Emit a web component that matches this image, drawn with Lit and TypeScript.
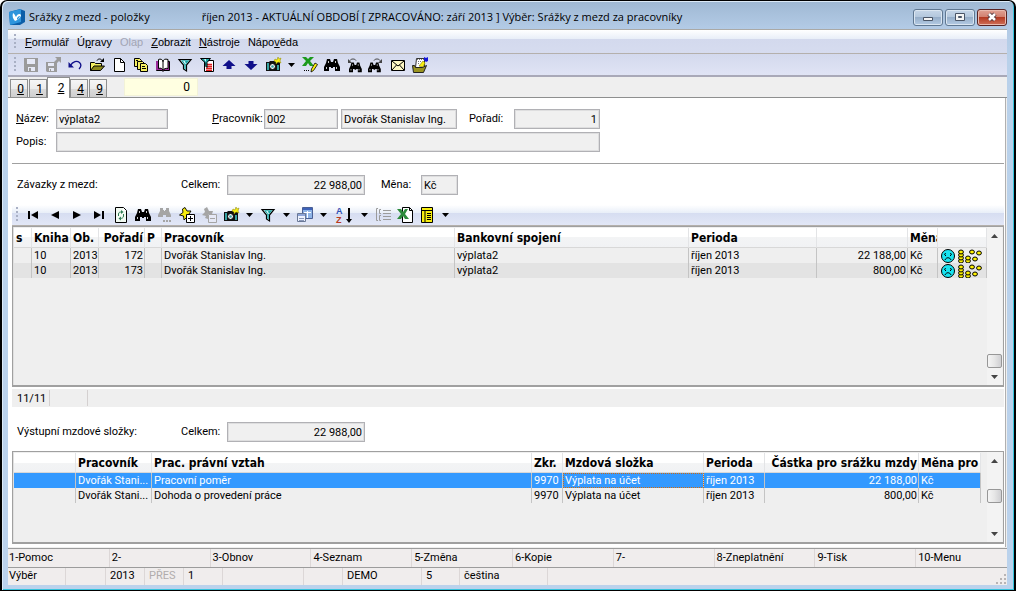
import { LitElement, html, svg, css, nothing, TemplateResult } from "lit";
import { customElement } from "lit/decorators.js";
import { classMap } from "lit/directives/class-map.js";

type Art = TemplateResult;

const art = (body: Art, w = 16, h = 16) => html`<svg class="art" width=${w} height=${h} viewBox="0 0 ${w} ${h}" aria-hidden="true">${body}</svg>`;

const floppy = svg`<path fill="#9b9b9b" d="M1 1h14v14H2l-1-1z"/><path fill="#e6e9f6" d="M4 2h8v5H4zM5 10h7v4H5z"/><path fill="#9b9b9b" d="M6 11h2v3H6z"/>`;
const floppyOut = svg`<path fill="#9b9b9b" d="M1 5h11v10H2l-1-1zM10 0h6v6l-2-2-3 3-2-2 3-3z"/><path fill="#e6e9f6" d="M3 6h6v3H3zM4 11h5v3H4z"/><path fill="#9b9b9b" d="M5 12h1v2H5z"/>`;
const undo = svg`<path fill="none" stroke="#10108a" stroke-width="1.300" d="M3 9C6 4 10 3.500 12.500 5.500c2 2 1.500 4.500-.500 6.500"/><path fill="#10108a" d="M1.500 5v5.500H7z"/>`;
const folder = svg`<path fill="#f4ee62" stroke="#000" d="M1.500 13.500v-8h4l1 1h6v3"/><path fill="#8f8a1c" stroke="#000" d="M1.500 13.500l3.500-4.500h10.500l-4 4.500z"/><path fill="none" stroke="#000" d="M8 3.500c1-2 4-2 5 0"/><path d="M11 5h4V1z"/>`;
const page = svg`<path fill="#fff" stroke="#000" d="M3.500 1.500h6l4 4v9h-10z"/><path fill="none" stroke="#000" d="M9.500 1.500v4h4"/>`;
const copies = svg`<g stroke="#000"><path fill="#f4ee62" d="M1.500 1.500h5l2 2v6h-7z"/><path fill="#f4ee62" d="M4.500 4.500h5l2 2v6h-7z"/><path fill="#f4ee62" d="M7.500 6.500h5l2 2v6h-7z"/></g><path fill="#000" d="M9 9h3v1H9zM9 11h4v1H9zM3 3h2v1H3z"/>`;
const book = svg`<path fill="#9a2a9a" stroke="#000" d="M1.500 4.500h13v9h-6l-.500 1-.500-1h-6z"/><path fill="#9a2a9a" d="M1 4h2v9H1z"/><path fill="#fff" stroke="#000" d="M3.500 2.500c2-1 4 0 4.500 2 .500-2 2-3 5-2v9c-2-.500-4 0-5 2-.500-2-2.500-3-4.500-2z"/><path stroke="#000" d="M8 4v9"/>`;
const funnel = svg`<path fill="#fff" stroke="#000" stroke-width="1.200" d="M2 2.500h12L9.500 8v6l-3-2V8z"/><path fill="#1aa4a4" d="M4 3.200h8.500L8.800 7.600v5L7.300 11.700V7.600z"/><path fill="#d4f5f5" d="M6 4h2l1 3H8z"/>`;
const funnelPage = svg`<path fill="#fff" stroke="#000" d="M5.500 3.500h9v11h-9z"/><path stroke="#e02020" stroke-width="1.300" d="M8 7.500h5M8 9.500h5M7 11.500h6M7 13.300h6"/><path fill="#1aa4a4" stroke="#000" d="M1.500 1.500h10L8 5.500v5l-2-2v-3z"/><path fill="#d4f5f5" d="M5 2h2v3z"/>`;
const upArrow = svg`<path fill="#10108a" d="M8 3l6.500 6h-4v3h-5V9h-4z"/>`;
const downArrow = svg`<path fill="#10108a" d="M8 13l6.500-6h-4V4h-5v3h-4z"/>`;
const camera = svg`<path fill="#111" d="M1 5h3l1-1h5l1 1h4v9H1z"/><path fill="#36a3a3" d="M2 6h2v7H2zM12 8h2v5h-2z"/><circle cx="7.500" cy="9.500" r="3" fill="#eee" stroke="#000"/><circle cx="7.500" cy="9.500" r="1.300" fill="#36a3a3"/><path fill="#f8ee10" stroke="#8a8400" stroke-width=".5" d="M10 2l2 1 1-3 1 2 2-1-1 3 1 2-3-1-2 2V5L9 4z"/>`;
const excelPen = svg`<path fill="#1c9a1c" d="M0 0h4l2 2 2-2h4L8 4l4 5H8L6 6 4 9H0l4-5z"/><path fill="#f8ee10" stroke="#000" stroke-width=".8" d="M13 6l2.500 1.500-4 6-2.500 1.500.500-3z"/><path fill="#000" d="M2 13h1v1H2zM4 13h1v1H4zM6 13h1v1H6z"/>`;
const binoShape = svg`<path d="M3 2h3l1 3h2l1-3h3l1 4 2 4v4h-5v-4H9v1H7v-1H5v4H0v-4l2-4z"/><path fill="#fff" opacity=".8" d="M4 4h1v2H4zM2 10h1v2H2zM11 4h1v2h-1zM12 10h1v2h-1z"/>`;
const bino = binoShape;
const binoPrev = svg`<g transform="translate(3 4) scale(.8)">${binoShape}</g><path fill="none" stroke="#444" d="M4 3.500c1-2 5-2 6 0"/><path fill="#444" d="M2 2v4h4z"/>`;
const binoNext = svg`<g transform="translate(0 4) scale(.8)">${binoShape}</g><path fill="none" stroke="#444" d="M6 3.500c1-2 5-2 6 0"/><path fill="#444" d="M14 2v4h-4z"/>`;
const binoGrey = svg`<path fill="#a5a5a5" d="M3 1h3v2h1v1h1V3h1V1h3v3l2 4v2h-5V8H6v2H1V8l2-4z"/><path fill="#a5a5a5" d="M6 13h2v2H6zM9 13h2v2H9zM12 13h2v2h-2z"/>`;
const mail = svg`<path fill="#fff9c4" stroke="#000" d="M1.500 3.500h13v10h-13z"/><path fill="none" stroke="#000" d="M2 4l6 5 6-5M2 13l4.500-5M14 13L9.500 8"/>`;
const noteFolder = svg`<path fill="#fff" stroke="#333" d="M4.500 1.500h8v9h-9z"/><path stroke="#777" stroke-dasharray="1 1" d="M5 2.500h7M6 4.500h3M6 6.500h2"/><path fill="#f8ee10" stroke="#8a8400" stroke-width=".6" d="M7 9l4-5 2 2-2 4z"/><path fill="#9a9420" stroke="#222" d="M1.500 15.500l-1-7h2l1 2h7l4-2-3 7z"/><path fill="#1414d8" d="M12 0l2 1 2-1v4l-2 1-2-2z"/>`;
const navFirst = svg`<path d="M3 4h2v8H3zM13 4v8L6 8z"/>`;
const navPrev = svg`<path d="M12 4v8L4 8z"/>`;
const navNext = svg`<path d="M4 4v8l8-4z"/>`;
const navLast = svg`<path d="M11 4h2v8h-2zM3 4v8l7-4z"/>`;
const refresh = svg`<path fill="#fff" stroke="#000" d="M2.500.500h8l3 3v12h-11z"/><path fill="#f2faf2" d="M3 1h7v3h3v11H3z"/><path fill="none" stroke="#2f7d55" d="M5.500 9V7c0-2 2-2 3-2M10.500 7v2c0 2-2 2.500-3 2.500"/><path fill="#2f7d55" d="M8 3v4l2.500-2zM8 9.500v4L5.500 11.500z"/>`;
const starPlus = svg`<path fill="#f8ee10" stroke="#000" stroke-width=".9" d="M6 .500l2 3.500h4L10 7l2 4-4-1-3 3-.500-4L.500 8 4 5.500 3.500 2z"/><path fill="#fff" stroke="#000" d="M7.500 7.500h8v8h-8z"/><path stroke="#000" d="M9 11.500h5M11.500 9v5"/>`;
const starMinus = svg`<path fill="#a5a5a5" d="M6 0l2 4h4l-1 3H7v5l-3-1 1-2-4-1 3-3-1-3z"/><path fill="#e6e9f6" stroke="#a5a5a5" d="M7.500 7.500h8v8h-8z"/><path stroke="#a5a5a5" d="M9 11.500h5"/>`;
const windows = svg`<path fill="#8fb4e6" stroke="#4a5f94" d="M5.500.500h10v11h-10z"/><path fill="#3e62b8" d="M6 1h9v2H6z"/><path stroke="#fff" d="M7 5.500h7M10.500 4v7"/><path fill="#eef3ff" stroke="#6a7896" d="M.500 6.500h8v8h-8z"/><path fill="#8fa6d8" d="M1 7h7v2H1z"/><path stroke="#8a98b8" d="M2 11.500h5M2 13.500h5"/>`;
const sortAz = svg`<text x="0" y="7" font-size="9" fill="#2f4fb4" class="glyph">A</text><text x="0" y="16" font-size="9" fill="#b83a20" class="glyph">Z</text><path d="M12 1h2v11h2l-3 4-3-4h2z"/>`;
const list = svg`<path fill="none" stroke="#9b9b9b" d="M3 1.500H1.500v12H3M6 2.500H4.500v4H6M6 8.500H4.500v5H6"/><path stroke="#9b9b9b" d="M8 3.500h8M8 6.500h8M8 9.500h8M8 12.500h8"/>`;
const excelPage = svg`<path fill="#fff" stroke="#000" d="M5.500.500h7l3 3v12h-10z"/><path fill="none" stroke="#000" d="M12.500.500v3h3"/><path fill="#2c8a3c" d="M0 2h4l2 3 2-3h3L8 7l4 5H8L6 9l-2 3H0l4-5z"/>`;
const yellowTable = svg`<path fill="#f8ee10" stroke="#000" d="M2.500.500h11v15h-11z"/><path stroke="#000" d="M3 3.500h10M6 3v12"/><path stroke="#000" d="M8 6.500h4M8 8.500h4M8 10.500h4M8 12.500h4"/>`;
const sadFace = svg`<circle cx="8" cy="7" r="6.500" fill="#18e4f0" stroke="#000"/><path fill="none" stroke="#000" d="M4 5.500l2-1M12 5.500l-2-1M5 11c1-3 5-3 6 0"/><path d="M5 6h1v1H5zM10 6h1v1h-1z"/>`;
const coinAt = (x: number, y: number) => svg`<ellipse cx=${x} cy=${y} rx="2.400" ry="2" fill="#fff200" stroke="#000"/>`;
const coins = svg`${coinAt(3, 12)}${coinAt(3, 9)}${coinAt(3, 6)}${coinAt(3, 3)}${coinAt(10, 12)}${coinAt(10, 9)}${coinAt(14, 3)}${coinAt(17, 10)}${coinAt(21, 4)}`;
const appMark = svg`<path fill="#0d5ea8" d="M0 3l11-3 5 2v11l-5 3H1z"/><path fill="#2f95dc" d="M0 3l12-3v13L1 16z"/><path fill="#fff" d="M4 4c2 1 2 3 3 4 1-3 4-4 5-2 0 2-3 5-6 6-2-2-3-5-2-8z"/><path fill="#2f95dc" d="M8 9l2-2 1 0-1 2-2 2z"/>`;

type Tool = { name: string; art?: Art; off?: boolean; wide?: boolean };
const t = (name: string, body: Art, extra: Partial<Tool> = {}): Tool => ({ name, art: body, ...extra });
const more = (name: string): Tool => ({ name });

const mainTools: Tool[] = [
  t("Uložit", floppy, { off: true }), t("Uložit a zavřít", floppyOut, { off: true }), t("Zpět", undo),
  t("Otevřít", folder), t("Nový", page), t("Kopie", copies), t("Kniha", book), t("Filtr", funnel),
  t("Filtr výběru", funnelPage), t("Předchozí", upArrow), t("Další", downArrow), t("Snímek", camera),
  more("Další snímky"), t("Export", excelPen), t("Hledat", bino), t("Hledat předchozí", binoPrev),
  t("Hledat další", binoNext), t("Pošta", mail), t("Poznámky", noteFolder),
];

const gridTools: Tool[] = [
  t("První", navFirst), t("Předchozí", navPrev), t("Další", navNext), t("Poslední", navLast),
  t("Obnovit", refresh), t("Hledat", bino), t("Hledat další", binoGrey, { off: true }),
  t("Přidat", starPlus), t("Odebrat", starMinus, { off: true }), t("Snímek", camera), more("Další snímky"),
  t("Filtr", funnel), more("Další filtry"), t("Okna", windows), more("Další okna"),
  t("Řadit", sortAz, { wide: true }), more("Další řazení"), t("Seznam", list, { off: true }),
  t("Excel", excelPage), t("Sloupce", yellowTable), more("Další sloupce"),
];

/* The character after "_" is the access key. */
const keyed = (s: string) => {
  const i = s.indexOf("_");
  return i < 0 ? html`${s}` : html`${s.slice(0, i)}<u>${s[i + 1]}</u>${s.slice(i + 2)}`;
};

type Col = { head: string; width?: number; right?: boolean };

const dueCols: Col[] = [
  { head: "s", width: 18 }, { head: "Kniha", width: 39 }, { head: "Ob.", width: 28 },
  { head: "Pořadí", width: 46, right: true }, { head: "P", width: 17 }, { head: "Pracovník" },
  { head: "Bankovní spojení", width: 234 }, { head: "Perioda", width: 128 },
  { head: "", width: 91, right: true }, { head: "Měna", width: 30 }, { head: "", width: 49 },
];
const marks = html`<span class="marks">${art(sadFace, 16, 14)}${art(coins, 24, 14)}</span>`;
const dueRows = [
  ["", "10", "2013", "172", "", "Dvořák Stanislav Ing.", "výplata2", "říjen 2013", "22 188,00", "Kč", marks],
  ["", "10", "2013", "173", "", "Dvořák Stanislav Ing.", "výplata2", "říjen 2013", "800,00", "Kč", marks],
];

const wageCols: Col[] = [
  { head: "", width: 62 }, { head: "Pracovník", width: 76 }, { head: "Prac. právní vztah" },
  { head: "Zkr.", width: 31 }, { head: "Mzdová složka", width: 141 }, { head: "Perioda", width: 61 },
  { head: "Částka pro srážku mzdy", width: 154, right: true }, { head: "Měna pro", width: 62 },
];
const wageRows = [
  ["", "Dvořák Stani...", "Pracovní poměr", "9970", "Výplata na účet", "říjen 2013", "22 188,00", "Kč"],
  ["", "Dvořák Stani...", "Dohoda o provedení práce", "9970", "Výplata na účet", "říjen 2013", "800,00", "Kč"],
];

@customElement("app-root")
export class AppRoot extends LitElement {
  static styles = css`
    :host { display: block; color: #000; font: 11px/14px Roboto, "Liberation Sans", sans-serif; }
    * { box-sizing: border-box; }
    button, input { font: inherit; color: inherit; margin: 0; border-radius: 0; }
    button { border: 0; padding: 0; background: none; }
    u { text-underline-offset: 1px; }
    .art { display: block; overflow: visible; }
    .glyph { font-family: "Liberation Sans", sans-serif; font-weight: bold; }

    .window { display: flex; flex-direction: column; min-height: 100vh; padding: 0 7px 5px 6px; border: 1px solid #000; border-left-width: 2px; border-right-width: 2px; border-radius: 7px 7px 0 0; background: linear-gradient(#9fb8d3, #b3cbe6 28px, #b9d1ea 60px, #bbd2ec); box-shadow: inset 1px 1px 0 #dceaf7, inset -1px -1px 0 #35c3dc; }
    .title { display: flex; align-items: center; height: 28px; padding: 4px 0 0 1px; font: 11px/16px "Open Sans", "Noto Sans", sans-serif; }
    .name { margin: 0 52px 0 4px; font: inherit; white-space: nowrap; }
    .period { flex: 1; min-width: 0; white-space: nowrap; overflow: hidden; }
    .frame-buttons { display: flex; gap: 2px; }
    .frame-button { display: grid; place-items: center; width: 30px; height: 17px; border: 1px solid #5f7791; border-radius: 3px; background: linear-gradient(#c6d6e8, #b2c6dc 50%, #96aec9 50%, #b4cbe4); box-shadow: inset 0 0 0 1px #dbe6f1; }
    .frame-button.close { border-color: #5a2424; background: linear-gradient(#e0a193, #d07d6c 50%, #b43a22 50%, #cf7059); box-shadow: inset 0 0 0 1px #e9b9ad; }

    .client { flex: 1; display: flex; flex-direction: column; background: #efefef; border-top: 1px solid #aaa9a6; }
    .bar { display: flex; align-items: center; background: linear-gradient(#fff, #e8eef8 9px, #d3d9ed 9px, #d6dcef); border-bottom: 1px solid #b4b0ac; }
    .bar::before { content: ""; flex: none; width: 2px; height: 16px; margin: 0 4px 0 6px; background: repeating-linear-gradient(#a9b0c4 0 2px, transparent 2px 4px); }
    .menu { height: 24px; gap: 8px; font: 11px/14px "Liberation Sans", sans-serif; }
    .menu::before { margin-right: 1px; }
    .menu .off { color: #a2a5b4; }
    .tools { height: 23px; background: linear-gradient(#d3d9ed, #e0e4f5); border-bottom: 2px solid #a9a9b8; }
    .grid-tools { height: 21px; background: linear-gradient(#fff, #e8eef8 8px, #d6ddf1 8px, #e2e7f7); }
    .grid-tools::before { margin: 0 4px; }
    .tool { display: grid; place-items: center; flex: none; width: 22px; height: 20px; }
    .tool.more { width: 15px; }
    .tool.wide { width: 26px; }

    .tabs { display: flex; align-items: flex-end; gap: 1px; height: 21px; padding-left: 2px; border-bottom: 1px solid #8e8f8f; }
    .tab { width: 18px; height: 18px; padding-left: 3px; font-size: 12px; border: 1px solid #8e8f8f; border-bottom: 0; background: linear-gradient(#f6f6f6, #ececec 50%, #dcdcdc 50%, #cfcfcf); }
    .tab.on { width: 23px; height: 21px; margin: 0 -1px -1px; padding: 0 0 1px 5px; background: #fff; }
    .counter { align-self: center; width: 74px; height: 18px; margin-left: 16px; padding: 0 7px; border: 1px solid #f2f2d8; background: #ffffe1; text-align: right; font-size: 12px; }

    .sheet { flex: 1; display: flex; flex-direction: column; margin-right: 1px; padding: 11px 1px 3px 4px; background: #fff; border-right: 1px solid #b0b0b0; }
    .form { display: grid; grid-template-columns: 40px 112px 44px 52px 74px 3px 116px 12px 45px 86px; row-gap: 3px; align-items: center; padding-left: 4px; }
    .field { width: 100%; min-width: 0; height: 20px; padding: 1px 2px 0; border: 1px solid #b1b1b5; outline: 1px solid #dededf; outline-offset: -2px; background: #f0f0f0; }
    .num { text-align: right; }
    .c2 { grid-column: 2; } .c4 { grid-column: 4; } .c5 { grid-column: 5; } .c7 { grid-column: 7; } .c9 { grid-column: 9; } .c10 { grid-column: 10; }
    .span { grid-column: 2 / 11; }
    .rule { width: 100%; height: 1px; margin: 11px 0; border: 0; background: #a0a0a0; flex: none; }
    .totals { display: grid; grid-template-columns: 164px 46px 138px 16px 40px 37px; align-items: center; padding-left: 5px; }
    .totals.first { margin-bottom: 10px; }
    .totals.second { margin: 15px 0 9px; }

    .grid { display: flex; border: 1px solid #a0a0a0; border-width: 1px 1px 2px; background: #efefef; box-shadow: inset 1px 0 0 #e0e0e0; }
    .grid.tall { flex: 1; min-height: 80px; }
    .grid.short { height: 93px; }
    .grid-body { flex: 1; min-width: 0; padding: 1px 0 0 1px; }
    .short .grid-body { padding-right: 6px; }
    table { width: 100%; table-layout: fixed; border-collapse: separate; border-spacing: 0; }
    th, td { padding: 0 1px 0 2px; text-align: left; white-space: nowrap; overflow: hidden; }
    th { height: 20px; font: bold 12px/14px "DejaVu Sans Condensed", "DejaVu Sans", sans-serif; font-stretch: condensed; background: linear-gradient(#fff 50%, #f3f4f5 50%, #f1f2f4); border-right: 1px solid #e3e4e6; border-bottom: 1px solid #d8d8d8; }
    td { height: 15px; line-height: 14px; border-right: 1px solid #c4c4c4; }
    .right { text-align: right; }
    .tall tbody tr:nth-child(2) { background: #e3e3e3; }
    .picked { background: #3399ff; color: #fff; }
    .picked .focus { outline: 1px dotted #d06a10; outline-offset: -1px; }
    .marks { display: flex; gap: 2px; align-items: center; }
    .scroll { display: grid; grid-template-rows: 17px 1fr 14px 17px; width: 15px; margin-right: 1px; background: #f3f3f3; }
    .short .scroll { grid-template-rows: 17px 20px 14px 1fr; }
    .short .scroll .arrow:last-child { align-items: end; padding-bottom: 6px; }
    .arrow { display: grid; place-items: center; }
    .thumb { border: 1px solid #979797; border-radius: 2px; background: linear-gradient(90deg, #f5f5f5, #e6e6e6 50%, #cfcfd2); }

    .count { display: flex; height: 18px; margin-top: 2px; padding-left: 5px; align-items: center; background: #efefef; line-height: 18px; }
    .count span { width: 33px; height: 16px; border-right: 1px solid #d4d0d0; }
    .count span + span { width: 38px; }
    .keys, .status { display: flex; background: #f0eded; border-top: 1px solid #9c9c9c; }
    .keys { height: 19px; margin-top: 1px; line-height: 18px; padding-left: 1px; }
    .key { flex: 0 0 10.1%; text-align: left; border-right: 1px solid #dcd7d7; padding-right: 4px; }
    .key + .key { padding-left: 2px; }
    .key:last-child { flex: 1; border: 0; }
    .status { height: 18px; line-height: 16px; position: relative; }
    .cell { flex: none; padding-left: 4px; border-right: 1px solid #dcd7d7; }
    .cell.off { color: #b0acac; }
    .cell:first-child { padding-left: 1px; }
    .w58 { width: 58px; } .w40 { width: 40px; } .w39 { width: 39px; } .w81 { width: 81px; } .w79 { width: 79px; } .w38 { width: 38px; } .w88 { width: 88px; }
    .grip { position: absolute; right: 1px; bottom: 1px; }
  `;

  private toolbar(tools: Tool[], cls: string, label: string) {
    return html`<div class="bar ${cls}" role="toolbar" aria-label=${label}>
      ${tools.map((x) => html`<button
        class=${classMap({ tool: true, more: !x.art, wide: !!x.wide })}
        aria-label=${x.name} ?disabled=${!!x.off}
      >${x.art ? art(x.art) : art(svg`<path d="M0 0h7L3.500 4z"/>`, 7, 4)}</button>`)}
    </div>`;
  }

  private scrollbar() {
    return html`<div class="scroll">
      <button class="arrow" aria-label="Nahoru">${art(svg`<path fill="#444" d="M0 4h7L3.500 0z"/>`, 7, 4)}</button>
      <span></span><span class="thumb"></span>
      <button class="arrow" aria-label="Dolů">${art(svg`<path fill="#444" d="M0 0h7L3.500 4z"/>`, 7, 4)}</button>
    </div>`;
  }

  private grid(cls: string, cols: Col[], rows: unknown[][], picked = -1, focus = -1) {
    return html`<div class="grid ${cls}">
      <div class="grid-body"><table>
        <colgroup>${cols.map((c) => html`<col style=${c.width ? `width:${c.width}px` : nothing}>`)}</colgroup>
        <thead><tr>${cols.map((c) => html`<th class=${classMap({ right: !!c.right })}>${c.head}</th>`)}</tr></thead>
        <tbody>${rows.map((r, i) => html`<tr class=${classMap({ picked: i === picked })}>
          ${r.map((v, j) => html`<td class=${classMap({ right: !!cols[j].right, focus: j === focus })}>${v}</td>`)}
        </tr>`)}</tbody>
      </table></div>
      ${this.scrollbar()}
    </div>`;
  }

  render() {
    return html`<main class="window">
      <header class="title">
        ${art(appMark)}
        <h1 class="name">Srážky z mezd - položky</h1>
        <span class="period">říjen 2013 - AKTUÁLNÍ OBDOBÍ [ ZPRACOVÁNO: září 2013 ] Výběr: Srážky z mezd za pracovníky</span>
        <div class="frame-buttons">
          <button class="frame-button" aria-label="Minimalizovat">${art(svg`<path fill="#f4f4f4" stroke="#4a5566" d="M.500 2.500h9v3h-9z"/>`, 10, 4)}</button>
          <button class="frame-button" aria-label="Obnovit velikost">${art(svg`<path fill="#f4f4f4" stroke="#4a5566" d="M.500.500h9v7h-9z"/><path fill="#8ba3bd" stroke="#4a5566" d="M3.500 3.500h3v1h-3z"/>`, 10, 8)}</button>
          <button class="frame-button close" aria-label="Zavřít">${art(svg`<path fill="none" stroke="#53353a" stroke-width="4.500" d="M2 1l6 6M8 1L2 7"/><path fill="none" stroke="#fff" stroke-width="2.500" d="M2 1l6 6M8 1L2 7"/>`, 10, 8)}</button>
        </div>
      </header>
      <section class="client">
        <nav class="bar menu">
          ${["_Formulář", "Ú_pravy", "Olap", "_Zobrazit", "_Nástroje", "Nápo_věda"].map((m) => html`<button class=${classMap({ off: m === "Olap" })} ?disabled=${m === "Olap"}>${keyed(m)}</button>`)}
        </nav>
        ${this.toolbar(mainTools, "tools", "Formulář")}
        <div class="tabs">
          ${["0", "1", "2", "4", "9"].map((n) => html`<button class=${classMap({ tab: true, on: n === "2" })}><u>${n}</u></button>`)}
          <input class="counter" aria-label="Počet" readonly value="0">
        </div>
        <div class="sheet">
          <div class="form">
            <label for="name">${keyed("_Název:")}</label><input id="name" class="field c2" readonly value="výplata2">
            <label class="c4" for="worker">${keyed("_Pracovník:")}</label><input id="worker" class="field c5" readonly value="002">
            <input class="field c7" aria-label="Jméno pracovníka" readonly value="Dvořák Stanislav Ing.">
            <label class="c9" for="order">Pořadí:</label><input id="order" class="field num c10" readonly value="1">
            <label for="note">Popis:</label><input id="note" class="field span" readonly value="">
          </div>
          <hr class="rule">
          <div class="totals first">
            <span>Závazky z mezd:</span><label for="due">Celkem:</label><input id="due" class="field num" readonly value="22 988,00">
            <span></span><label for="cur">Měna:</label><input id="cur" class="field" readonly value="Kč">
          </div>
          ${this.toolbar(gridTools, "grid-tools", "Závazky")}
          ${this.grid("tall", dueCols, dueRows)}
          <div class="count"><span>11/11</span><span></span></div>
          <div class="totals second">
            <span>Výstupní mzdové složky:</span><label for="paid">Celkem:</label><input id="paid" class="field num" readonly value="22 988,00">
          </div>
          ${this.grid("short", wageCols, wageRows, 0, 4)}
        </div>
        <div class="keys">
          ${["1-Pomoc", "2-", "3-Obnov", "4-Seznam", "5-Změna", "6-Kopie", "7-", "8-Zneplatnění", "9-Tisk", "10-Menu"].map((k) => html`<button class="key">${k}</button>`)}
        </div>
        <footer class="status">
          <span class="cell w58">Výběr</span><span class="cell w40"></span><span class="cell w39">2013</span><span class="cell off w39">PŘES</span><span class="cell w39">1</span><span class="cell w81"></span><span class="cell w39"></span><span class="cell w79">DEMO</span><span class="cell w38">5</span><span class="cell w88">čeština</span>
          <span class="grip">${art(svg`<path fill="#b8b4b4" d="M8 0h2v2H8zM4 4h2v2H4zM8 4h2v2H8zM0 8h2v2H0zM4 8h2v2H4zM8 8h2v2H8z"/>`, 10, 10)}</span>
        </footer>
      </section>
    </main>`;
  }
}
